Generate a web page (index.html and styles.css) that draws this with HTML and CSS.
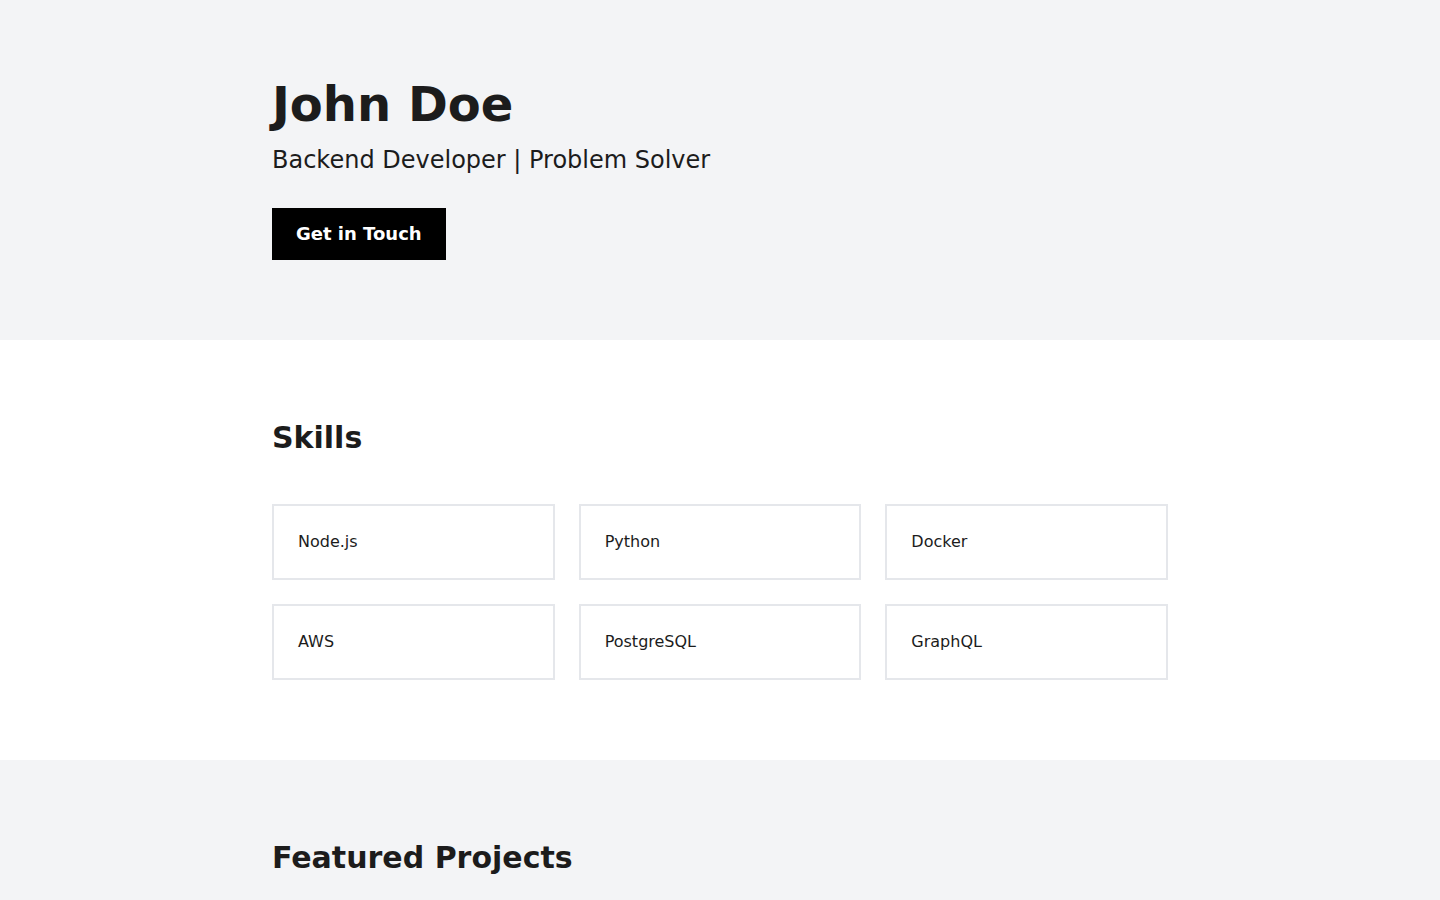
FILE: index.html
```html
<!DOCTYPE html>
<html lang="en">
<head>
<meta charset="utf-8">
<title>John Doe</title>
<link rel="stylesheet" href="styles.css">
</head>
<body>
<header class="hero">
  <div class="container">
    <h1 class="hero-title">John Doe</h1>
    <p class="hero-subtitle">Backend Developer | Problem Solver</p>
    <a class="btn" href="#contact">Get in Touch</a>
  </div>
</header>
<section class="section section-white">
  <div class="container">
    <h2 class="section-title">Skills</h2>
    <div class="skills-grid">
      <div class="skill-card">Node.js</div>
      <div class="skill-card">Python</div>
      <div class="skill-card">Docker</div>
      <div class="skill-card">AWS</div>
      <div class="skill-card">PostgreSQL</div>
      <div class="skill-card">GraphQL</div>
    </div>
  </div>
</section>
<section class="section section-gray">
  <div class="container">
    <h2 class="section-title">Featured Projects</h2>
  </div>
</section>
</body>
</html>
```
FILE: styles.css
```css
* { box-sizing: border-box; }
html, body { margin: 0; padding: 0; }
body {
  font-family: "DejaVu Sans", sans-serif;
  color: #1c1c1c;
  background: #ffffff;
}
.container {
  max-width: 896px;
  margin: 0 auto;
}
.hero {
  background: #f3f4f6;
  padding: 80px 0;
}
.hero-title {
  margin: 0;
  font-size: 48px;
  line-height: 48px;
  font-weight: 700;
}
.hero-subtitle {
  margin: 16px 0 0;
  font-size: 24px;
  line-height: 32px;
}
.btn {
  display: inline-block;
  margin-top: 32px;
  background: #000;
  color: #fff;
  text-decoration: none;
  font-weight: 700;
  font-size: 18px;
  line-height: 20px;
  padding: 16px 24px;
}
.section {
  padding: 80px 0;
}
.section-white { background: #fff; }
.section-gray { background: #f3f4f6; }
.section-title {
  margin: 0 0 48px;
  font-size: 30px;
  line-height: 36px;
  font-weight: 700;
}
.skills-grid {
  display: grid;
  grid-template-columns: repeat(3, 1fr);
  gap: 24px;
}
.skill-card {
  border: 2px solid #e5e7eb;
  padding: 24px;
  font-size: 16px;
  line-height: 24px;
}
```
